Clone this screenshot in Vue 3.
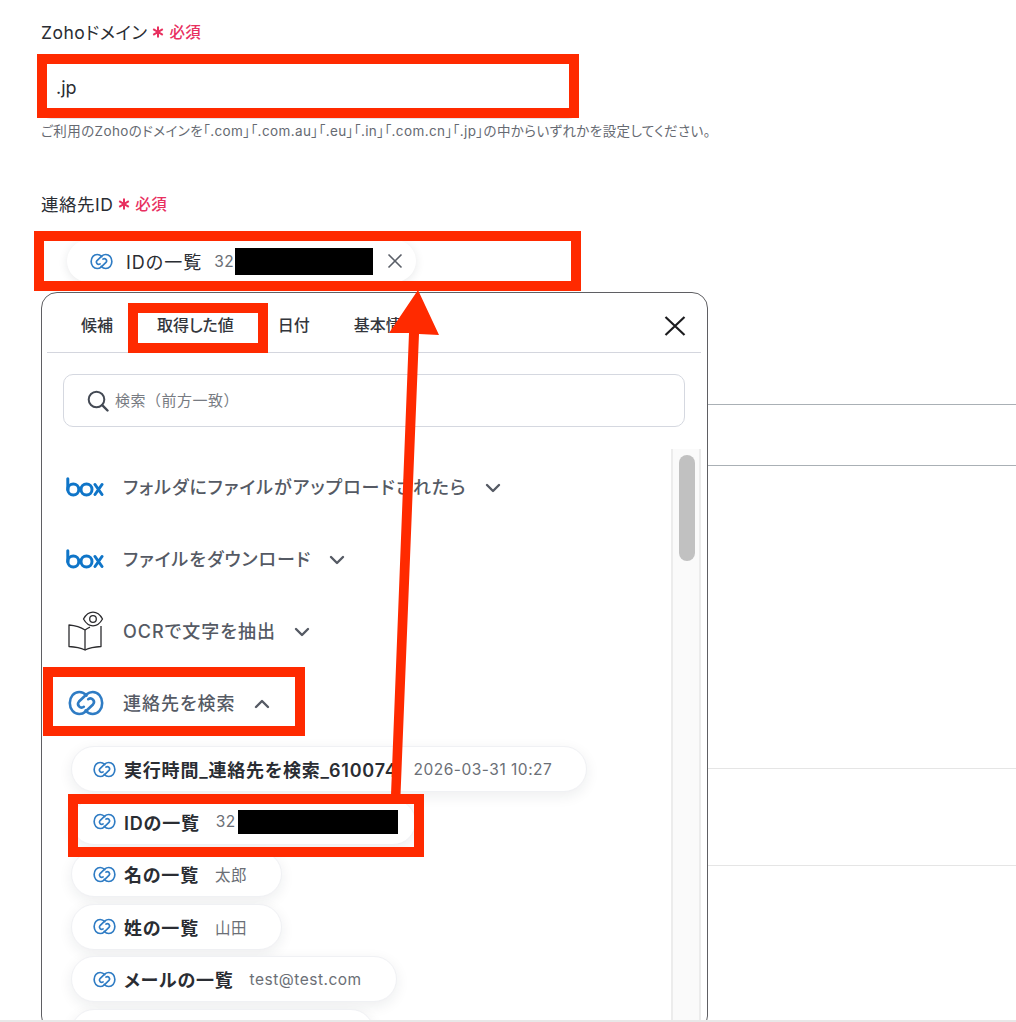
<template>
  <div class="page">
    <svg class="defs" width="0" height="0">
      <symbol id="zoho" viewBox="0 0 36 26">
        <g fill="none" stroke="#2f7cc4" stroke-width="2.600" stroke-linecap="round">
          <path id="zoho-half" d="M18.500 5.500C16.500 3.200 14 2 11.300 2 5.700 2 1.800 7 1.800 13s3.900 11 9.500 11c2.300 0 4.400-.8 6-2.300l7.700-7.200a3.600 3.600 0 0 0-4.800-5.300" />
          <path d="M18.500 5.500C16.500 3.200 14 2 11.300 2 5.700 2 1.800 7 1.800 13s3.900 11 9.500 11c2.300 0 4.400-.8 6-2.300l7.700-7.200a3.600 3.600 0 0 0-4.800-5.300" transform="rotate(180 18 13)" />
        </g>
      </symbol>
      <symbol id="box" viewBox="0 0 38 20">
        <g fill="none" stroke="#0f75c8" stroke-width="3" stroke-linecap="round">
          <path d="M1.800 1.800v11" />
          <circle cx="7.300" cy="12.500" r="5.500" />
          <circle cx="20.500" cy="12.500" r="5.500" />
          <path d="M29 7.500 36 17.500M36 7.500 29 17.500" />
        </g>
      </symbol>
      <symbol id="chev" viewBox="0 0 16 10">
        <path d="M2 2l6 6 6-6" fill="none" stroke="#555a64" stroke-width="2.400" stroke-linecap="round" stroke-linejoin="round" />
      </symbol>
      <symbol id="star" viewBox="0 0 12 12">
        <path d="M6 .5v11M1.200 3.200l9.600 5.600M10.800 3.200 1.200 8.800" fill="none" stroke="#e8305f" stroke-width="2" />
      </symbol>
    </svg>

    <div class="content">
      <div class="field">
        <div class="label">
          <span>Zohoドメイン</span>
          <svg class="star"><use href="#star" /></svg>
          <span class="req">必須</span>
        </div>
        <div class="input input-text">.jp</div>
        <p class="hint">ご利用のZohoのドメインを「.com」「.com.au」「.eu」「.in」「.com.cn」「.jp」の中からいずれかを設定してください。</p>
      </div>

      <div class="field field-id">
        <div class="label">
          <span>連絡先ID</span>
          <svg class="star"><use href="#star" /></svg>
          <span class="req">必須</span>
        </div>
        <div class="input input-chip">
          <div class="selected">
            <svg class="chip-icon"><use href="#zoho" /></svg>
            <span class="selected-name">IDの一覧</span>
            <span class="value">32<span class="redact redact-top"></span></span>
            <svg class="remove" viewBox="0 0 16 16">
              <path d="M1.500 1.500l13 13M14.500 1.500l-13 13" stroke="#5a5f68" stroke-width="1.600" fill="none" />
            </svg>
          </div>
        </div>
      </div>

      <!-- rows behind the popup -->
      <div class="rows">
        <div class="row row-a"></div>
        <div class="row row-b"></div>
        <div class="row row-c"></div>
        <div class="row row-d"></div>
      </div>

      <div class="popup">
        <div class="tabs">
          <span v-for="tab in tabs" :key="tab" class="tab">{{ tab }}</span>
          <svg class="close" viewBox="0 0 22 20">
            <path d="M1.500 1l19 18M20.500 1l-19 18" stroke="#1c1c1f" stroke-width="2.200" fill="none" />
          </svg>
        </div>

        <div class="search">
          <svg class="search-icon" viewBox="0 0 22 22">
            <circle cx="9.500" cy="9.500" r="7.800" fill="none" stroke="#444a54" stroke-width="2" />
            <path d="M15.200 15.200 20.500 20.500" stroke="#444a54" stroke-width="2.400" stroke-linecap="round" />
          </svg>
          <span class="search-text">検索（前方一致）</span>
        </div>

        <div class="list-wrap">
          <div class="list">
            <div v-for="step in steps" :key="step.name" class="step">
              <span class="step-icon">
                <svg v-if="step.icon === 'box'" class="box-logo"><use href="#box" /></svg>
                <svg v-else-if="step.icon === 'zoho'" class="zoho-logo"><use href="#zoho" /></svg>
                <svg v-else class="book" viewBox="0 0 36 40" fill="none" stroke="#2b2b2e" stroke-width="1.300" stroke-linejoin="round">
                  <path d="M1 14C7 14.500 12.500 16 17 19V39C12.500 36.800 7 35.800 1 35.500z" />
                  <path d="M17 19C18.500 18 20 17 22 16.200M33 15V35.500C27 35.800 21.500 36.800 17 39" />
                  <path d="M15.500 8C18 3.500 21.500 1.200 25 1.200S32 3.500 34.500 8C32 12.500 28.500 14.800 25 14.800S18 12.500 15.500 8z" />
                  <circle cx="25" cy="8" r="3.300" />
                </svg>
              </span>
              <span class="step-name">{{ step.name }}</span>
              <svg class="chevron" :class="{ up: step.open }"><use href="#chev" /></svg>
            </div>

            <div class="chips">
              <div v-for="chip in chips" :key="chip.name" class="chip">
                <svg class="chip-icon"><use href="#zoho" /></svg>
                <span class="chip-name">{{ chip.name }}</span>
                <span class="value">{{ chip.value }}<span v-if="chip.hidden" class="redact"></span></span>
              </div>
              <div class="chip chip-cut"></div>
            </div>
          </div>

          <div class="scrollbar">
            <div class="thumb"></div>
          </div>
        </div>
      </div>

      <!-- red annotations -->
      <div class="mark mark-domain"></div>
      <div class="mark mark-id"></div>
      <div class="mark mark-tab"></div>
      <div class="mark mark-step"></div>
      <div class="mark mark-chip"></div>
      <svg class="arrow" width="1016" height="1020" viewBox="0 0 1016 1020">
        <path d="M418 290 439 335 419 334 400.500 795 391 795 409 333 389 333z" fill="#ff2a00" />
      </svg>
    </div>
    <div class="strip"></div>
  </div>
</template>

<script setup>
const tabs = ["候補", "取得した値", "日付", "基本情報"]

const steps = [
  { name: "フォルダにファイルがアップロードされたら", icon: "box" },
  { name: "ファイルをダウンロード", icon: "box" },
  { name: "OCRで文字を抽出", icon: "book" },
  { name: "連絡先を検索", icon: "zoho", open: true }
]

const chips = [
  { name: "実行時間_連絡先を検索_610074", value: "2026-03-31 10:27" },
  { name: "IDの一覧", value: "32", hidden: true },
  { name: "名の一覧", value: "太郎" },
  { name: "姓の一覧", value: "山田" },
  { name: "メールの一覧", value: "test@test.com" }
]
</script>

<style>
html,
body {
  margin: 0;
  background: #fff;
}
</style>

<style scoped>
.page {
  width: 1016px;
  height: 1022px;
  display: flex;
  flex-direction: column;
  overflow: hidden;
  background: #fff;
  font-family: Inter, "Noto Sans CJK JP", sans-serif;
  font-feature-settings: "palt";
  color: #2a2d33;
}

.defs {
  position: absolute;
}

.content {
  position: relative;
  flex: 1;
  overflow: hidden;
  padding-top: 19px;
}

.strip {
  height: 2px;
  background: #e8e8e8;
}

.field {
  width: 537px;
  padding-left: 41px;
}

.field-id {
  margin-top: 50px;
}

.label {
  display: flex;
  align-items: center;
  height: 24px;
  font-size: 17.500px;
  letter-spacing: 0.500px;
  white-space: nowrap;
}

.star {
  width: 12px;
  height: 12px;
  margin: 2px 5px 0 5px;
}

.req {
  font-size: 15.500px;
  font-weight: 500;
  letter-spacing: 0.300px;
  color: #e8305f;
}

.input {
  box-sizing: border-box;
  border: 1px solid #e4e6ec;
  border-radius: 10px;
  display: flex;
  align-items: center;
}

.input-text {
  height: 60px;
  margin-top: 16px;
  padding: 0 0 4px 14px;
  font-size: 18px;
}

.input-chip {
  height: 58px;
  margin-top: 17px;
  padding-left: 25px;
}

.hint {
  margin: 2px 0 0;
  font-size: 13.500px;
  letter-spacing: 0.400px;
  line-height: 20px;
  color: #666a72;
  white-space: nowrap;
}

.selected {
  display: flex;
  align-items: center;
  height: 42px;
  width: 349px;
  flex: none;
  box-sizing: border-box;
  padding-left: 23px;
  border-radius: 21px;
  background: #fff;
  box-shadow: 0 2px 10px rgba(30, 35, 50, 0.1);
  font-size: 18px;
  white-space: nowrap;
}

.selected-name {
  margin-left: 13px;
  letter-spacing: 1px;
}

.selected .value {
  margin-left: 12px;
}

.remove {
  width: 16px;
  height: 16px;
  margin-left: 14px;
}

.rows {
  margin: 114px 0 0 41px;
}

.row {
  box-sizing: border-box;
  border-top: 1px solid #aab0b5;
}

.row-a {
  height: 61px;
}

.row-b {
  height: 303px;
}

.row-c {
  height: 97px;
  border-top-color: #e5e5e5;
}

.row-d {
  border-top-color: #e5e5e5;
}

.popup {
  position: absolute;
  left: 41px;
  top: 292px;
  width: 667px;
  height: 740px;
  box-sizing: border-box;
  border: 1px solid #5f5f63;
  border-radius: 16px;
  background: #fff;
  display: flex;
  flex-direction: column;
}

.tabs {
  position: relative;
  flex: none;
  height: 60px;
  margin: 0 6px 0 5px;
  padding-left: 34px;
  display: flex;
  align-items: center;
  gap: 44px;
  border-bottom: 1px solid #d4d6de;
  box-sizing: border-box;
  font-size: 16px;
  font-weight: 500;
  color: #33363c;
}

.tab {
  position: relative;
  top: 1px;
}

.close {
  position: absolute;
  right: 15px;
  top: 23px;
  width: 22px;
  height: 20px;
}

.search {
  flex: none;
  height: 53px;
  margin: 21px 22px 0 21px;
  box-sizing: border-box;
  border: 1px solid #d5d8e0;
  border-radius: 10px;
  display: flex;
  align-items: center;
  padding-left: 23px;
  gap: 6px;
  font-size: 15px;
  letter-spacing: 0.500px;
  color: #777b82;
}

.search-text {
  font-feature-settings: normal;
  margin-bottom: 2px;
}

.search-icon {
  width: 22px;
  height: 22px;
}

.list-wrap {
  flex: 1;
  display: flex;
  margin-top: 22px;
  min-height: 0;
}

.list {
  flex: 1;
  padding-top: 2px;
}

.step {
  height: 72px;
  padding-left: 24px;
  display: flex;
  align-items: center;
}

.step-icon {
  width: 57px;
  display: flex;
  align-items: center;
}

.box-logo {
  width: 38px;
  height: 20px;
}

.zoho-logo {
  width: 36px;
  height: 26px;
  margin-left: 2px;
}

.book {
  width: 36px;
  height: 40px;
  margin-left: 2px;
}

.step-name {
  font-size: 18px;
  font-weight: 500;
  letter-spacing: 1px;
  margin-bottom: 2px;
  color: #555a64;
}

.chevron {
  width: 16px;
  height: 10px;
  margin: 2px 0 0 18px;
}

.chevron.up {
  transform: rotate(180deg);
}

.chips {
  margin-top: 7px;
  padding-left: 29px;
  display: flex;
  flex-direction: column;
  align-items: flex-start;
  gap: 6.500px;
}

.chip {
  height: 46px;
  flex: none;
  box-sizing: border-box;
  padding: 0 34px 0 21px;
  display: flex;
  align-items: center;
  border-radius: 23px;
  background: #fff;
  border: 1px solid #f0f1f4;
  box-shadow: 0 4px 14px rgba(30, 35, 50, 0.08);
  white-space: nowrap;
  font-size: 18px;
}

.chip-cut {
  width: 303px;
}

.chip-icon {
  flex: none;
  width: 23px;
  height: 17px;
}

.chip-name {
  margin-left: 8px;
  font-weight: 600;
  letter-spacing: 0.800px;
  color: #2a2d33;
}

.value {
  display: flex;
  align-items: center;
  font-size: 15.500px;
  letter-spacing: 0.500px;
  color: #6b6f76;
  margin-left: 16px;
}

.redact {
  display: inline-block;
  width: 160px;
  height: 24px;
  margin: 0 -17px 0 2px;
  background: #000;
}

.redact-top {
  width: 138px;
  height: 27px;
  margin: 0 0 0 1px;
}

.scrollbar {
  flex: none;
  width: 30px;
  margin-right: 6px;
  box-sizing: border-box;
  border-left: 2px solid #ececec;
  border-right: 2px solid #ececec;
  background: #fafafa;
  padding: 6px 0 0 6px;
}

.thumb {
  width: 16px;
  height: 106px;
  border-radius: 8px;
  background: #c1c1c1;
}

.mark {
  position: absolute;
  box-sizing: border-box;
  border: 10px solid #ff2a00;
}

.mark-domain {
  left: 37px;
  top: 54px;
  width: 542px;
  height: 64px;
}

.mark-id {
  left: 34px;
  top: 231px;
  width: 547px;
  height: 60px;
}

.mark-tab {
  left: 128px;
  top: 303px;
  width: 140px;
  height: 50px;
}

.mark-step {
  left: 43px;
  top: 667px;
  width: 262px;
  height: 69px;
}

.mark-chip {
  left: 68px;
  top: 794px;
  width: 356px;
  height: 63px;
}

.arrow {
  position: absolute;
  left: 0;
  top: 0;
  pointer-events: none;
}
</style>
